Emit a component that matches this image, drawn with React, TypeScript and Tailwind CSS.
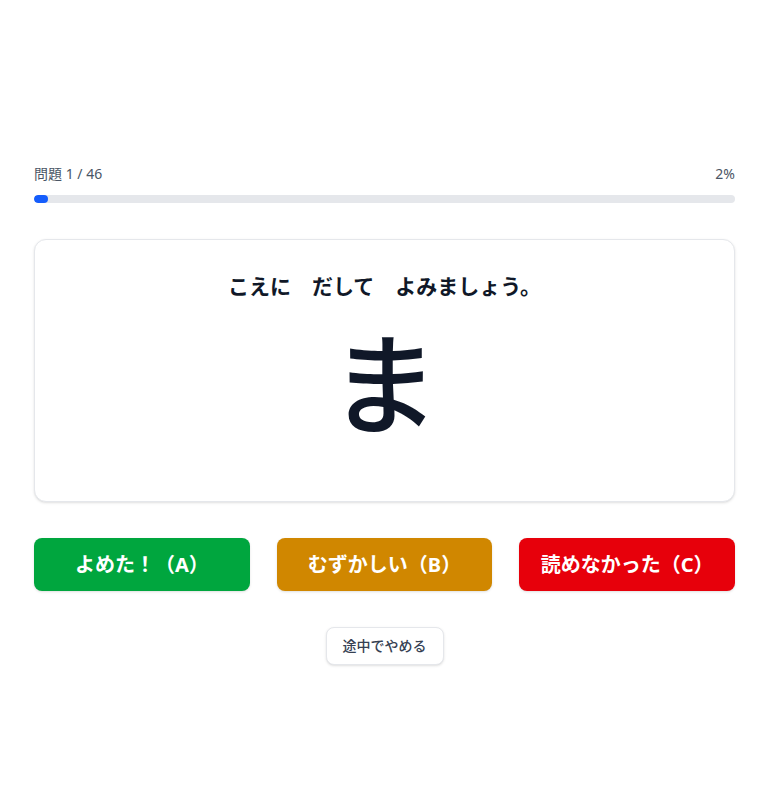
import React from "react";

export default function App() {
  const progress = 2;
  return (
    <div
      className="min-h-screen bg-white pl-[34px] pr-[30px] pt-[164px]"
      style={{ fontFamily: '"Noto Sans", "Noto Sans CJK JP", sans-serif' }}
    >
      <div className="flex flex-col">
        <div className="flex items-center justify-between text-sm leading-5 text-gray-600">
          <span>問題 1 / 46</span>
          <span>2%</span>
        </div>
        <div className="mt-[11px] h-2 w-full overflow-hidden rounded-full bg-gray-200">
          <div className="h-full rounded-full bg-blue-600" style={{ width: `${progress}%` }} />
        </div>

        <div className="mt-9 flex h-[263px] flex-col items-center rounded-xl border border-gray-200 bg-white pt-8 shadow-sm">
          <p className="text-[21px] font-semibold leading-7 text-gray-900">こえに　だして　よみましょう。</p>
          <div className="mt-[28px] text-[110px] leading-none font-medium text-gray-900">ま</div>
        </div>

        <div className="mt-9 grid grid-cols-3 gap-[27px]">
          <button className="h-[53px] rounded-lg bg-green-600 text-xl font-bold text-white shadow-sm">
            よめた！（A）
          </button>
          <button className="h-[53px] rounded-lg bg-yellow-600 text-xl font-bold text-white shadow-sm">
            むずかしい（B）
          </button>
          <button className="h-[53px] rounded-lg bg-red-600 text-xl font-bold text-white shadow-sm">
            読めなかった（C）
          </button>
        </div>

        <div className="mt-9 flex justify-center">
          <button className="rounded-lg border border-gray-200 bg-white px-4 py-2 text-sm font-medium leading-5 text-gray-700 shadow-sm">
            途中でやめる
          </button>
        </div>
      </div>
    </div>
  );
}
